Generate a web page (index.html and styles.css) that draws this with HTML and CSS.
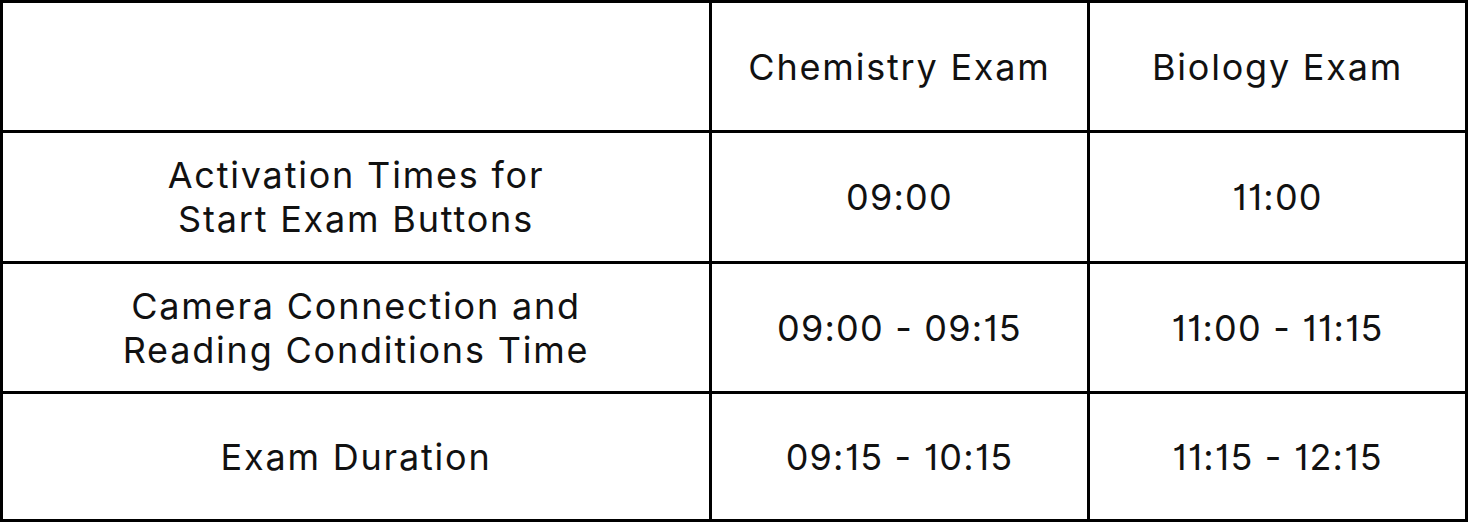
FILE: index.html
```html
<!DOCTYPE html>
<html>
<head>
<meta charset="utf-8">
<link rel="stylesheet" href="styles.css">
</head>
<body>
<table class="schedule">
  <tr class="row-head">
    <td class="cell cell-label"></td>
    <td class="cell">Chemistry Exam</td>
    <td class="cell cell-last">Biology Exam</td>
  </tr>
  <tr class="row-a">
    <td class="cell cell-label">Activation Times for<br>Start Exam Buttons</td>
    <td class="cell cell-time">09:00</td>
    <td class="cell cell-time cell-last">11:00</td>
  </tr>
  <tr class="row-b">
    <td class="cell cell-label">Camera Connection and<br>Reading Conditions Time</td>
    <td class="cell cell-time">09:00 - 09:15</td>
    <td class="cell cell-time cell-last">11:00 - 11:15</td>
  </tr>
  <tr class="row-c row-last">
    <td class="cell cell-label">Exam Duration</td>
    <td class="cell cell-time">09:15 - 10:15</td>
    <td class="cell cell-time cell-last">11:15 - 12:15</td>
  </tr>
</table>
</body>
</html>
```
FILE: styles.css
```css
html, body {
  margin: 0;
  padding: 0;
  background: #ffffff;
}
.schedule {
  border-collapse: separate;
  border-spacing: 0;
  border: 3px solid #000;
  width: 1468px;
  table-layout: fixed;
  font-family: "Inter", "DejaVu Sans", sans-serif;
  font-size: 36px;
  letter-spacing: 1.8px;
  font-feature-settings: "cv01" 1;
  color: #111;
}
.cell {
  border-right: 3px solid #000;
  border-bottom: 3px solid #000;
  padding: 0;
  text-align: center;
  vertical-align: middle;
  line-height: 44px;
  width: 375px;
}
.cell-time {
  letter-spacing: 1.2px;
}
.cell-label {
  width: 706px;
}
.cell-last {
  border-right: none;
}
.row-last .cell {
  border-bottom: none;
}
.row-head .cell { height: 127px; }
.row-a .cell { height: 128px; }
.row-b .cell { height: 127px; }
.row-c .cell { height: 125px; }
```
